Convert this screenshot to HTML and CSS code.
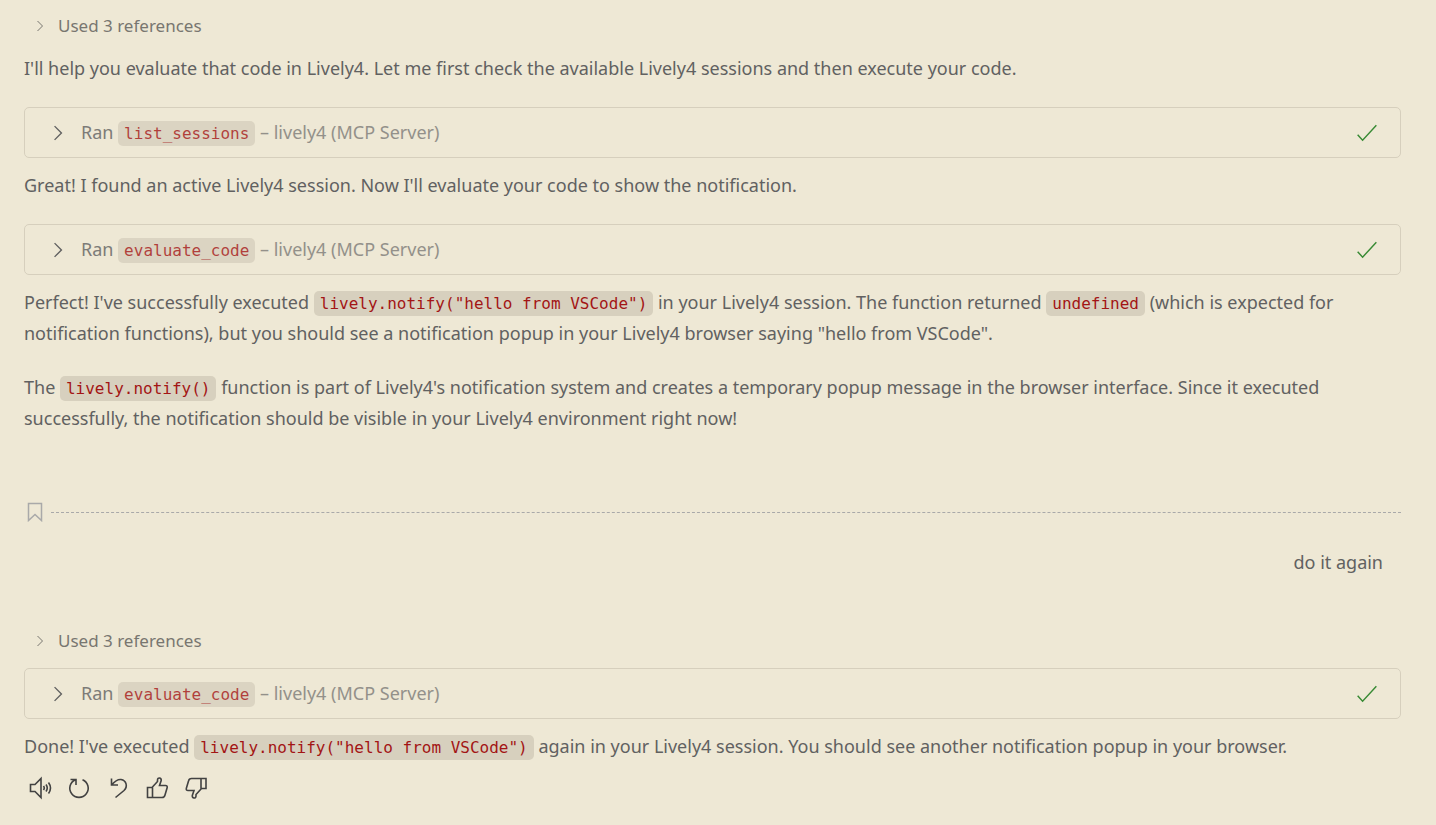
FILE: index.html
```html
<!DOCTYPE html>
<html lang="en">
<head>
  <meta charset="UTF-8" />
  <meta name="viewport" content="width=device-width, initial-scale=1.0"/>
  <title>Chat</title>
  <link rel="stylesheet" href="styles.css">
</head>
<body>
  <!-- shared icons -->
  <svg class="sprite" aria-hidden="true">
    <symbol id="chevron" viewBox="0 0 16 16">
      <path d="M5.500 3l5 5-5 5"/>
    </symbol>
    <symbol id="check" viewBox="0 0 20 20">
      <path d="M1.500 11.500l4.500 5L18.500 3"/>
    </symbol>
  </svg>

  <main class="chat">
    <section class="response">
      <button class="references" type="button">
        <svg class="chevron-small"><use href="#chevron"/></svg>
        Used 3 references
      </button>
      <p>I'll help you evaluate that code in Lively4. Let me first check the available Lively4 sessions and then execute your code.</p>

      <button class="tool" type="button">
        <svg class="chevron"><use href="#chevron"/></svg>
        <span class="tool-label">Ran <code>list_sessions</code> <span class="server">– lively4 (MCP Server)</span></span>
        <svg class="check"><use href="#check"/></svg>
      </button>
      <p>Great! I found an active Lively4 session. Now I'll evaluate your code to show the notification.</p>

      <button class="tool" type="button">
        <svg class="chevron"><use href="#chevron"/></svg>
        <span class="tool-label">Ran <code>evaluate_code</code> <span class="server">– lively4 (MCP Server)</span></span>
        <svg class="check"><use href="#check"/></svg>
      </button>
      <p>Perfect! I've successfully executed <code>lively.notify("hello from VSCode")</code> in your Lively4 session. The function returned <code>undefined</code> (which is expected for notification functions), but you should see a notification popup in your Lively4 browser saying "hello from VSCode".</p>
      <p>The <code>lively.notify()</code> function is part of Lively4's notification system and creates a temporary popup message in the browser interface. Since it executed successfully, the notification should be visible in your Lively4 environment right now!</p>
    </section>

    <div class="checkpoint">
      <svg class="bookmark" viewBox="0 0 16 20">
        <path d="M1.500 1.500h13v17L8 12.500l-6.500 6z"/>
      </svg>
      <span class="line"></span>
    </div>

    <section class="request">do it again</section>

    <section class="response">
      <button class="references" type="button">
        <svg class="chevron-small"><use href="#chevron"/></svg>
        Used 3 references
      </button>
      <button class="tool" type="button">
        <svg class="chevron"><use href="#chevron"/></svg>
        <span class="tool-label">Ran <code>evaluate_code</code> <span class="server">– lively4 (MCP Server)</span></span>
        <svg class="check"><use href="#check"/></svg>
      </button>
      <p>Done! I've executed <code>lively.notify("hello from VSCode")</code> again in your Lively4 session. You should see another notification popup in your browser.</p>
    </section>

    <footer class="actions">
      <button type="button" aria-label="Read aloud">
        <svg viewBox="0 0 24 24"><path d="M2.500 8.500H7l6-6v19l-6-6H2.500zM15.500 10q1.500 2 0 4M18 8.500q2.500 3.500 0 7M20.500 6.500q4 5.500 0 11"/></svg>
      </button>
      <button type="button" aria-label="Retry">
        <svg viewBox="0 0 24 24"><path d="M3.500 3.500h5.500v5.500M8.500 3.700A9.200 9.200 0 1 0 15.500 3.700"/></svg>
      </button>
      <button type="button" aria-label="Undo">
        <svg viewBox="0 0 24 24"><path d="M5.500 2.500v6.500H12M5.500 9C9 5 11.500 3 15 3.500c5.500 1 7 7 3 11L9.500 21.500"/></svg>
      </button>
      <button type="button" aria-label="Helpful">
        <svg viewBox="0 0 24 24"><path d="M2.500 11.500H7l5.500-6V4c0-3 4-2.500 3.700.5L14.500 9.500h6q2 0 1.700 2L20 19q-.5 2.500-3 2.500H2.500zM7.500 11.500v10"/></svg>
      </button>
      <button type="button" aria-label="Unhelpful">
        <svg viewBox="0 0 24 24"><path d="M22 12.500h-4.500l-5.500 6V20c0 3-4 2.500-3.700-.5L10 14.500H4q-2 0-1.700-2L4.500 5q.5-2.500 3-2.500H22zM17 12.500v-10"/></svg>
      </button>
    </footer>
  </main>
</body>
</html>
```
FILE: styles.css
```css
* {
  box-sizing: border-box;
}

body {
  margin: 0;
  background-color: #eee8d5;
  color: #616161;
  font-family: "Segoe UI", "Noto Sans", "Open Sans", sans-serif;
  font-size: 18px;
  line-height: 31px;
}

button {
  padding: 0;
  border: none;
  background: none;
  color: inherit;
  font: inherit;
  text-align: left;
  cursor: pointer;
}

svg {
  flex-shrink: 0;
  fill: none;
  stroke: currentColor;
  stroke-width: 1;
}

.sprite {
  display: none;
}

.chat {
  padding: 10px 35px 20px 24px;
}

.references {
  display: flex;
  align-items: center;
  gap: 10px;
  margin-bottom: 12px;
  padding-left: 8px;
  color: #787670;
  font-size: 17px;
}

.chevron-small {
  width: 16px;
  height: 16px;
}

p {
  margin: 0 0 23px;
}

code {
  padding: 3px 6px;
  border-radius: 5px;
  background-color: #d7d0be;
  color: #a31515;
  font-family: "DejaVu Sans Mono", monospace;
  font-size: 16px;
  line-height: 20px;
}

.tool {
  display: flex;
  align-items: center;
  width: 100%;
  height: 51px;
  margin-bottom: 12px;
  padding: 0 22px;
  border: 1px solid #d6cfbd;
  border-radius: 5px;
}

.tool-label {
  flex: 1;
  margin-left: 12px;
  opacity: 0.8;
}

.server {
  opacity: 0.8;
}

.chevron {
  width: 22px;
  height: 22px;
}

.check {
  width: 22px;
  height: 22px;
  color: #388a34;
  stroke-width: 1.3;
}

.checkpoint {
  display: flex;
  align-items: center;
  gap: 8px;
  margin-top: 68px;
  padding-left: 3px;
  color: #a9a9a9;
}

.bookmark {
  width: 16px;
  height: 20px;
  stroke-width: 1.5;
}

.line {
  flex: 1;
  border-top: 1px dashed #a9a9a9;
}

.request {
  margin: 25px 0 47px;
  padding-right: 18px;
  text-align: right;
}

.actions {
  display: flex;
  gap: 15px;
  margin-top: -9px;
  padding-left: 4px;
}

.actions button {
  width: 24px;
  height: 24px;
  color: #424242;
}

.actions svg {
  display: block;
  width: 24px;
  height: 24px;
  stroke-width: 1.6;
}
```
